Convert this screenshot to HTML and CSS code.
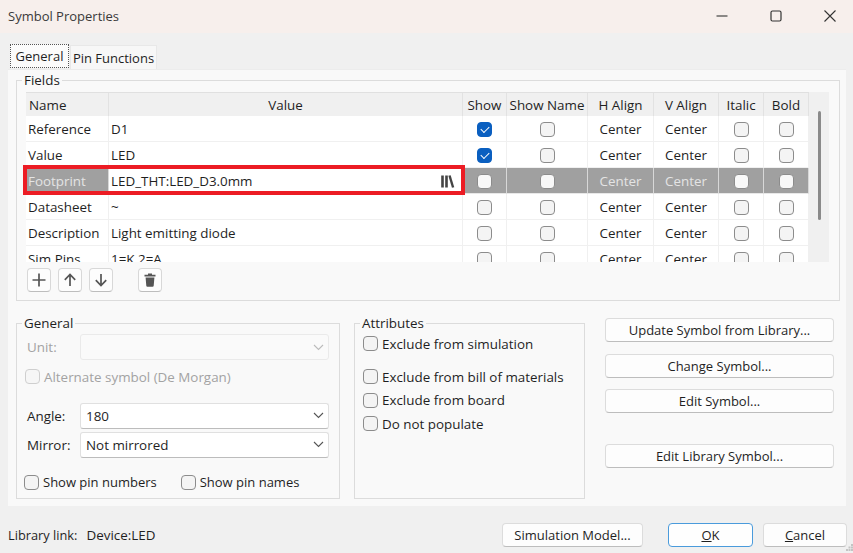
FILE: index.html
```html
<!DOCTYPE html>
<html lang="en">
<head>
    <meta charset="UTF-8">
    <meta name="viewport" content="width=device-width, initial-scale=1.0">
    <title>Symbol Properties</title>
    <link rel="stylesheet" href="styles.css">
</head>
<body>
    <div class="dialog">
        <header class="titlebar">
            <span class="title">Symbol Properties</span>
            <div class="window-buttons">
                <svg width="12" height="12" viewBox="0 0 12 12"><path d="M0.500 6h11" stroke="#333" stroke-width="1.100" fill="none"/></svg>
                <svg width="12" height="12" viewBox="0 0 12 12"><rect x="1" y="1" width="10" height="10" rx="1.500" stroke="#333" stroke-width="1.200" fill="none"/></svg>
                <svg width="12" height="12" viewBox="0 0 12 12"><path d="M0.500 0.500l11 11M11.500 0.500l-11 11" stroke="#333" stroke-width="1.100" fill="none"/></svg>
            </div>
        </header>

        <nav class="tabs">
            <span class="tab tab-active">General</span>
            <span class="tab">Pin Functions</span>
        </nav>

        <main class="panel">
            <fieldset class="group fields-group">
                <legend>Fields</legend>
                <div class="grid-wrap">
                    <div class="grid-clip">
                        <div class="grid-row grid-head">
                            <span>Name</span><span>Value</span><span>Show</span><span>Show Name</span><span>H Align</span><span>V Align</span><span>Italic</span><span>Bold</span>
                        </div>
                        <div class="grid-row">
                            <span class="name">Reference</span><span class="value">D1</span>
                            <span><i class="check checked"></i></span><span><i class="check"></i></span>
                            <span>Center</span><span>Center</span><span><i class="check"></i></span><span><i class="check"></i></span>
                        </div>
                        <div class="grid-row">
                            <span class="name">Value</span><span class="value">LED</span>
                            <span><i class="check checked"></i></span><span><i class="check"></i></span>
                            <span>Center</span><span>Center</span><span><i class="check"></i></span><span><i class="check"></i></span>
                        </div>
                        <div class="grid-row grid-selected">
                            <span class="name">Footprint</span>
                            <span class="value value-edit">LED_THT:LED_D3.0mm
                                <svg class="lib-icon" width="14" height="13" viewBox="0 0 14 13"><path d="M1.500 0.500v12M5.500 0.500v12" stroke="#444" stroke-width="2.600" fill="none"/><path d="M8.500 0.500l3.600 12" stroke="#444" stroke-width="2.400" fill="none"/></svg>
                            </span>
                            <span><i class="check"></i></span><span><i class="check"></i></span>
                            <span>Center</span><span>Center</span><span><i class="check"></i></span><span><i class="check"></i></span>
                        </div>
                        <div class="grid-row">
                            <span class="name">Datasheet</span><span class="value">~</span>
                            <span><i class="check"></i></span><span><i class="check"></i></span>
                            <span>Center</span><span>Center</span><span><i class="check"></i></span><span><i class="check"></i></span>
                        </div>
                        <div class="grid-row">
                            <span class="name">Description</span><span class="value">Light emitting diode</span>
                            <span><i class="check"></i></span><span><i class="check"></i></span>
                            <span>Center</span><span>Center</span><span><i class="check"></i></span><span><i class="check"></i></span>
                        </div>
                        <div class="grid-row">
                            <span class="name">Sim.Pins</span><span class="value">1=K 2=A</span>
                            <span><i class="check"></i></span><span><i class="check"></i></span>
                            <span>Center</span><span>Center</span><span><i class="check"></i></span><span><i class="check"></i></span>
                        </div>
                    </div>
                    <div class="scrollbar"><div class="thumb"></div></div>
                    <div class="highlight"></div>
                </div>
                <div class="toolbar">
                    <button class="tool"><svg width="16" height="16" viewBox="0 0 16 16"><path d="M8 1.500v13M1.500 8h13" stroke="#555" stroke-width="1.700" fill="none"/></svg></button>
                    <button class="tool"><svg width="16" height="16" viewBox="0 0 16 16"><path d="M8 14V2.500M2.800 7.800L8 2.500l5.200 5.300" stroke="#555" stroke-width="1.700" fill="none"/></svg></button>
                    <button class="tool"><svg width="16" height="16" viewBox="0 0 16 16"><path d="M8 2v11.500M2.800 8.200L8 13.500l5.200-5.300" stroke="#555" stroke-width="1.700" fill="none"/></svg></button>
                    <button class="tool tool-delete"><svg width="16" height="16" viewBox="0 0 16 16"><path d="M2.500 2.800h11v1.600h-11zM6 1.500h4v1.500H6zM3.600 5.400h8.800l-.7 8.300q-.1 1-1.100 1H5.400q-1 0-1.100-1z" fill="#555"/></svg></button>
                </div>
            </fieldset>

            <div class="lower">
                <fieldset class="group general-group">
                    <legend>General</legend>
                    <div class="form-row disabled">
                        <label>Unit:</label>
                        <div class="select select-disabled"><span></span><svg class="chev" width="11" height="7" viewBox="0 0 11 7"><path d="M1 1l4.500 4.500L10 1" stroke="#bbb" stroke-width="1.100" fill="none"/></svg></div>
                    </div>
                    <label class="checkline disabled alt-line"><i class="check check-disabled"></i>Alternate symbol (De Morgan)</label>
                    <div class="form-row angle-row">
                        <label>Angle:</label>
                        <div class="select"><span>180</span><svg class="chev" width="11" height="7" viewBox="0 0 11 7"><path d="M1 1l4.500 4.500L10 1" stroke="#555" stroke-width="1.100" fill="none"/></svg></div>
                    </div>
                    <div class="form-row mirror-row">
                        <label>Mirror:</label>
                        <div class="select"><span>Not mirrored</span><svg class="chev" width="11" height="7" viewBox="0 0 11 7"><path d="M1 1l4.500 4.500L10 1" stroke="#555" stroke-width="1.100" fill="none"/></svg></div>
                    </div>
                    <div class="pin-line">
                        <label class="checkline"><i class="check"></i>Show pin numbers</label>
                        <label class="checkline"><i class="check"></i>Show pin names</label>
                    </div>
                </fieldset>

                <fieldset class="group attr-group">
                    <legend>Attributes</legend>
                    <label class="checkline sim-line"><i class="check"></i>Exclude from simulation</label>
                    <label class="checkline"><i class="check"></i>Exclude from bill of materials</label>
                    <label class="checkline"><i class="check"></i>Exclude from board</label>
                    <label class="checkline"><i class="check"></i>Do not populate</label>
                </fieldset>

                <div class="side-buttons">
                    <button class="btn">Update Symbol from Library...</button>
                    <button class="btn">Change Symbol...</button>
                    <button class="btn">Edit Symbol...</button>
                    <button class="btn btn-gap">Edit Library Symbol...</button>
                </div>
            </div>
        </main>

        <footer class="footer">
            <span class="lib-label">Library link:</span>
            <span class="lib-value">Device:LED</span>
            <button class="btn btn-sim">Simulation Model...</button>
            <button class="btn btn-ok"><u>O</u>K</button>
            <button class="btn btn-cancel"><u>C</u>ancel</button>
            <svg class="grip" width="7" height="7" viewBox="0 0 7 7"><path d="M5 0h2v2H5zM2.500 2.500h2v2h-2zM5 2.500h2v2H5zM0 5h2v2H0zM2.500 5h2v2h-2zM5 5h2v2H5z" fill="#c4c4c4"/></svg>
        </footer>
    </div>
</body>
</html>
```

FILE: styles.css
```css
* {
    box-sizing: border-box;
}
body {
    margin: 0;
    font-family: "Open Sans", "Noto Sans", Arial, sans-serif;
    font-size: 13.4px;
    color: #1f1f1f;
    background: #f0f0f0;
}
.dialog {
    position: relative;
    width: 853px;
    height: 553px;
    overflow: hidden;
    background: #f0f0f0;
}
.titlebar {
    height: 33px;
    background: #f7efec;
    display: flex;
    align-items: center;
    justify-content: space-between;
    padding: 0 8px 2px;
}
.title {
    font-size: 13px;
    color: #3a3a3a;
}
.window-buttons {
    display: flex;
    gap: 42px;
    padding-right: 9px;
}
.tabs {
    height: 36px;
    display: flex;
    align-items: flex-end;
    padding-left: 10px;
    gap: 1px;
}
.tab {
    width: 87px;
    height: 24px;
    white-space: nowrap;
    text-align: center;
    font-size: 13px;
    line-height: 25px;
    background: #f7f7f7;
    border: 1px solid #e8e8e8;
    border-bottom: none;
}
.tab-active {
    width: 59px;
    line-height: 22px;
    background: #fbfbfb;
    border: 1px dotted #555;
    margin-bottom: 1px;
}
.panel {
    margin: 0 7px 0 8px;
    height: 437px;
    background: #f9f9f9;
    border-top: 1px solid #ececec;
    padding: 0 6px 0 8px;
}
.group {
    margin: 0;
    padding: 0;
    border: 1px solid #dcdcdc;
    min-width: 0;
}
.group legend {
    padding: 0 2px;
    line-height: 16px;
}
.fields-group {
    height: 229px;
    margin-top: 2px;
    padding: 4px 9px 0 9px;
}
.fields-group legend,
.general-group legend {
    margin-left: -4px;
}
.grid-wrap {
    position: relative;
    display: flex;
    height: 170px;
    width: 803px;
    background: #f0f0f0;
}
.grid-clip {
    width: 783px;
    height: 170px;
    overflow: hidden;
    background: #fff;
}
.grid-row {
    display: grid;
    grid-template-columns: 83px 354px 44px 81px 66px 65px 45px 45px;
    height: 26px;
}
.grid-row > span {
    display: flex;
    align-items: center;
    justify-content: center;
    white-space: nowrap;
    padding-top: 1px;
    border-right: 1px solid #f0f0f0;
    border-bottom: 1px solid #f0f0f0;
}
.grid-row > span.name,
.grid-row > span.value {
    justify-content: flex-start;
    padding-left: 2px;
}
.grid-head {
    height: 24px;
    background: #f0f0f0;
    border-top: 1px solid #e0e0e0;
}
.grid-head > span {
    padding-top: 0;
    border-right: 1px solid #e2e2e2;
    border-bottom: none;
}
.grid-head > span:first-child {
    justify-content: flex-start;
    padding-left: 3px;
}
.grid-selected {
    background: #a0a0a0;
    color: #e4e4e4;
}
.grid-selected > span {
    border-right-color: #d8d8d8;
    border-bottom-color: #e8e8e8;
}
.grid-selected > span.value-edit {
    background: #fff;
    color: #1f1f1f;
    justify-content: space-between;
    padding-right: 7px;
}
.check {
    display: inline-block;
    flex: none;
    width: 15px;
    height: 15px;
    border: 1px solid #8c8c8c;
    border-radius: 4px;
    background: #f4f4f4;
}
.checked {
    position: relative;
    background: #0a5fc0;
    border-color: #0a5fc0;
}
.checked::after {
    content: "";
    position: absolute;
    left: 3px;
    top: 3px;
    width: 7px;
    height: 4px;
    border-left: 1px solid #fff;
    border-bottom: 1px solid #fff;
    transform: rotate(-45deg);
}
.grid-selected .check {
    background: #f8f8f8;
}
.scrollbar {
    flex: 1;
    display: flex;
    justify-content: center;
    padding-top: 19px;
}
.thumb {
    width: 3px;
    height: 109px;
    background: #8a8a8a;
    border-radius: 2px;
}
.highlight {
    position: absolute;
    left: -3px;
    top: 73px;
    width: 442px;
    height: 30px;
    border: 4px solid #ec1c24;
}
.toolbar {
    display: flex;
    gap: 7px;
    padding: 6px 0 0 1px;
}
.tool {
    width: 24px;
    height: 24px;
    padding: 0;
    display: flex;
    align-items: center;
    justify-content: center;
    background: #fdfdfd;
    border: 1px solid #d8d8d8;
    border-bottom-color: #bdbdbd;
    border-radius: 4px;
}
.tool-delete {
    margin-left: 18px;
}
.lower {
    display: flex;
    margin-top: 14px;
}
.general-group {
    width: 324px;
    height: 184px;
    padding: 3px 9px 0 9px;
}
.attr-group {
    width: 231px;
    height: 184px;
    margin-left: 14px;
    padding: 1px 0 0 8px;
}
.attr-group legend {
    margin-left: -3px;
}
.form-row {
    display: flex;
    align-items: center;
}
.form-row label {
    width: 54px;
    padding-left: 1px;
}
.select {
    width: 249px;
    height: 26px;
    display: flex;
    align-items: center;
    justify-content: space-between;
    padding: 0 4px 0 5px;
    background: #fff;
    border: 1px solid #e0e0e0;
    border-bottom-color: #bcbcbc;
    border-radius: 3px;
}
.select-disabled {
    background: #fafafa;
    border-color: #eaeaea;
}
.disabled {
    color: #a3a3a3;
}
.check-disabled {
    border-color: #cfcfcf;
    background: #f6f6f6;
}
.checkline {
    display: flex;
    align-items: center;
    gap: 4px;
    height: 23.5px;
    white-space: nowrap;
}
.alt-line {
    margin: 5px 0 0 -1px;
}
.angle-row {
    margin-top: 14px;
}
.mirror-row {
    margin-top: 3px;
}
.pin-line {
    display: flex;
    gap: 24px;
    margin: 13px 0 0 -2px;
    font-size: 13px;
}
.sim-line {
    margin-bottom: 9.5px;
}
.side-buttons {
    margin: 3px 0 0 20px;
    width: 229px;
    display: flex;
    flex-direction: column;
    gap: 11.5px;
}
.btn {
    height: 24px;
    padding: 0;
    font: inherit;
    font-size: 13px;
    color: inherit;
    background: #fdfdfd;
    border: 1px solid #dcdcdc;
    border-bottom-color: #bdbdbd;
    border-radius: 4px;
}
.btn-gap {
    margin-top: 19.5px;
}
.footer {
    display: flex;
    align-items: center;
    height: 47px;
    padding: 11px 6px 0 8px;
}
.lib-label {
    font-size: 12.8px;
}
.lib-value {
    margin-left: 9px;
}
.btn-sim {
    width: 141px;
    margin-left: auto;
}
.btn-ok {
    width: 85px;
    margin-left: 25px;
    background: #fefefe;
    border: 1px solid #4a9bdc;
}
.btn-cancel {
    width: 84px;
    margin-left: 10px;
}
.grip {
    position: absolute;
    right: 0;
    bottom: 2px;
}
```
